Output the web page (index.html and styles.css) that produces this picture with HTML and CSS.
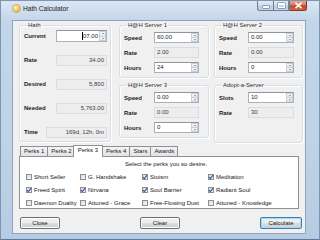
FILE: index.html
```html
<!DOCTYPE html>
<html lang="en">
<head>
    <meta charset="UTF-8">
    <title>Hath Calculator</title>
    <link rel="stylesheet" href="styles.css">
</head>
<body>
    <div class="window">
        <div class="titlebar">
            <span class="app-icon"></span>
            <span class="title">Hath Calculator</span>
            <div class="caption">
                <span class="cap min"><i></i></span>
                <span class="cap max"><i></i></span>
                <span class="cap close">
                    <svg width="9" height="7" viewBox="0 0 9 7"><path d="M1.5 0.8 L7.5 6.2 M7.5 0.8 L1.5 6.2" stroke="#fff" stroke-width="1.6" fill="none"/></svg>
                </span>
            </div>
        </div>

        <div class="client">
            <div class="groups">
                <fieldset class="group hath">
                    <legend>Hath</legend>
                    <div class="hath-rows">
                        <div class="row">
                            <span class="lbl">Current</span>
                            <span class="field wide right"><span class="caret"></span>07.00<span class="spin"><i class="up"></i><i class="down"></i></span></span>
                        </div>
                        <div class="row">
                            <span class="lbl">Rate</span>
                            <span class="readout wide right">34.00</span>
                        </div>
                        <div class="row">
                            <span class="lbl">Desired</span>
                            <span class="readout wide right">5,800</span>
                        </div>
                        <div class="row">
                            <span class="lbl">Needed</span>
                            <span class="readout wide right">5,763.00</span>
                        </div>
                        <div class="row">
                            <span class="lbl">Time</span>
                            <span class="readout time right">169d, 12h, 0m</span>
                        </div>
                    </div>
                </fieldset>

                <div class="stack">
                    <fieldset class="group server">
                        <legend>H@H Server 1</legend>
                        <div class="srow"><span class="lbl">Speed</span><span class="field">60.00<span class="spin"><i class="up"></i><i class="down"></i></span></span></div>
                        <div class="srow"><span class="lbl">Rate</span><span class="readout">2.00</span></div>
                        <div class="srow"><span class="lbl">Hours</span><span class="field">24<span class="spin"><i class="up"></i><i class="down"></i></span></span></div>
                    </fieldset>
                    <fieldset class="group server">
                        <legend>H@H Server 3</legend>
                        <div class="srow"><span class="lbl">Speed</span><span class="field">0.00<span class="spin"><i class="up"></i><i class="down"></i></span></span></div>
                        <div class="srow"><span class="lbl">Rate</span><span class="readout">0.00</span></div>
                        <div class="srow"><span class="lbl">Hours</span><span class="field">0<span class="spin"><i class="up"></i><i class="down"></i></span></span></div>
                    </fieldset>
                </div>

                <div class="stack right-col">
                    <fieldset class="group server">
                        <legend>H@H Server 2</legend>
                        <div class="srow"><span class="lbl">Speed</span><span class="field">0.00<span class="spin"><i class="up"></i><i class="down"></i></span></span></div>
                        <div class="srow"><span class="lbl">Rate</span><span class="readout">0.00</span></div>
                        <div class="srow"><span class="lbl">Hours</span><span class="field">0<span class="spin"><i class="up"></i><i class="down"></i></span></span></div>
                    </fieldset>
                    <fieldset class="group server adopt">
                        <legend>Adopt-a-Server</legend>
                        <div class="srow"><span class="lbl">Slots</span><span class="field">10<span class="spin"><i class="up"></i><i class="down"></i></span></span></div>
                        <div class="srow"><span class="lbl">Rate</span><span class="readout">30</span></div>
                    </fieldset>
                </div>
            </div>

            <div class="tabs">
                <span class="tab">Perks 1</span>
                <span class="tab">Perks 2</span>
                <span class="tab active">Perks 3</span>
                <span class="tab">Perks 4</span>
                <span class="tab">Stars</span>
                <span class="tab">Awards</span>
            </div>
            <div class="panel">
                <div class="panel-head">Select the perks you so desire.</div>
                <div class="perks" id="perks"></div>
            </div>

            <div class="buttons">
                <span class="btn">Close</span>
                <span class="btn">Clear</span>
                <span class="btn calc">Calculate</span>
            </div>
        </div>
    </div>

    <script>
        const perks = [
            { name: 'Short Seller', on: false },
            { name: 'G. Handshake', on: false },
            { name: 'Stoism', on: true },
            { name: 'Meditation', on: true },
            { name: 'Freed Spirit', on: true },
            { name: 'Nirvana', on: true },
            { name: 'Soul Barrier', on: true },
            { name: 'Radiant Soul', on: true },
            { name: 'Daemon Duality', on: false },
            { name: 'Attuned - Grace', on: false },
            { name: 'Free-Flowing Dust', on: false },
            { name: 'Attuned - Knowledge', on: false }
        ];

        const check = '<svg width="6" height="6" viewBox="0 0 6 6"><path d="M0.9 3.1 L2.4 4.6 L5.1 1.1" stroke="#3a56a3" stroke-width="1.2" fill="none"/></svg>';

        document.getElementById('perks').innerHTML = perks.map(p => `
            <label class="perk">
                <span class="box">${p.on ? check : ''}</span>
                <span>${p.name}</span>
            </label>
        `).join('');
    </script>
</body>
</html>
```

FILE: styles.css
```css
* {
    margin: 0;
    padding: 0;
    box-sizing: border-box;
}

body {
    width: 320px;
    height: 240px;
    overflow: hidden;
    font-family: "Liberation Sans", Arial, sans-serif;
    font-size: 6px;
    color: #1e1e1e;
}

.window {
    width: 320px;
    height: 240px;
    display: flex;
    flex-direction: column;
    padding: 0 13px 5px 11px;
    border: 1px solid #7d95b2;
    border-bottom-color: #5b7aa3;
    background: linear-gradient(180deg, #dce7f3 0, #c3d5e9 20px, #bfd2e7 60%, #b7cbe2 100%);
}

/* barra de titulo */
.titlebar {
    height: 19px;
    display: flex;
    align-items: flex-start;
}

.app-icon {
    width: 7px;
    height: 7px;
    margin: 4px 0 0 1px;
    border-radius: 50%;
    background: radial-gradient(circle at 35% 35%, #fff4bd, #f2c653 55%, #c88a1e);
    box-shadow: 0 0 0 0.5px #b07818;
}

.title {
    margin: 3px 0 0 3px;
    font-size: 6.6px;
    line-height: 9px;
    color: #1b1b1b;
}

.caption {
    margin-left: auto;
    margin-right: -1px;
    display: flex;
}

.cap {
    height: 10px;
    display: flex;
    align-items: center;
    justify-content: center;
    border: 1px solid #6b7f9c;
    border-top: none;
}

.min,
.max {
    width: 16px;
    background: linear-gradient(180deg, #e4ecf5 0, #cfdbe9 50%, #b9cadf 51%, #c6d6e8 100%);
}

.min {
    border-radius: 0 0 0 3px;
    border-right: none;
}

.min i {
    width: 6px;
    height: 2px;
    margin-top: 3px;
    background: #fff;
    box-shadow: 0 0 0 0.5px #526a8e;
}

.max i {
    width: 7px;
    height: 5px;
    border: 1px solid #fff;
    border-top-width: 2px;
    box-shadow: 0 0 0 0.5px #526a8e;
}

.close {
    width: 18px;
    border-color: #7a3a2e;
    border-left-color: #6b7f9c;
    border-radius: 0 0 3px 0;
    background: linear-gradient(180deg, #e9a898 0, #d8735e 45%, #c4401f 55%, #d66a3e 100%);
}

/* area cliente */
.client {
    flex: 1;
    background: #f0f0f0;
    border: 1px solid #8fa5be;
    display: flex;
    flex-direction: column;
}

.groups {
    display: flex;
    align-items: flex-start;
    margin: 1px 0 0 6px;
}

.group {
    border: 1px solid #d5dfe5;
    border-radius: 3px;
    box-shadow: inset 1px 1px 0 #fff, 1px 1px 0 #fff;
    padding: 3px 3px 4px 4px;
}

.group legend {
    font-size: 6px;
    line-height: 7px;
    padding: 0 1px;
    margin-left: 3px;
    color: #2b2b2b;
}

.hath {
    width: 92px;
    height: 120px;
    padding-top: 1px;
}

.hath-rows {
    display: flex;
    flex-direction: column;
    gap: 12px;
}

.row {
    display: flex;
    align-items: center;
    height: 12px;
}

.lbl {
    font-weight: 700;
    color: #1a1a1a;
}

.field,
.readout {
    height: 11px;
    display: flex;
    align-items: center;
    padding-left: 2px;
    line-height: 9px;
}

.field {
    background: #fff;
    border: 1px solid #abb2ba;
    border-top-color: #8e959d;
    padding-right: 0;
}

.readout {
    background: #ededed;
    border: 1px solid #dadcdf;
    color: #404040;
}

.right {
    justify-content: flex-end;
    padding-right: 2px;
}

.wide {
    margin-left: auto;
    width: 51px;
}

.row .field {
    height: 12px;
    padding-right: 0;
}

.time {
    margin-left: auto;
    width: 61px;
}

.caret {
    width: 1px;
    height: 8px;
    background: #000;
}

.spin {
    margin-left: auto;
    width: 7px;
    height: 100%;
    display: flex;
    flex-direction: column;
}

.right .spin {
    margin-left: 1px;
}

.spin i {
    flex: 1;
    display: flex;
    align-items: center;
    justify-content: center;
    background: linear-gradient(180deg, #f6f8fa, #e2e7ed);
    border: 1px solid #c7cfd8;
}

.spin i + i {
    border-top: none;
}

.spin i::after {
    content: "";
    border-left: 1px solid transparent;
    border-right: 1px solid transparent;
}

.spin .up::after {
    border-bottom: 1px solid #4b5d7a;
}

.spin .down::after {
    border-top: 1px solid #4b5d7a;
}

/* colunas dos servidores */
.stack {
    display: flex;
    flex-direction: column;
    gap: 4px;
    width: 90px;
    margin-left: 8px;
}

.right-col {
    width: 89px;
    margin-left: 5px;
}

.server {
    display: flex;
    flex-direction: column;
    gap: 4px;
}

.srow {
    display: grid;
    grid-template-columns: 30px 45px;
    align-items: center;
    height: 11px;
}

.right-col .srow {
    grid-template-columns: 29px 46px;
}

.adopt {
    height: 61px;
}

/* abas */
.tabs {
    display: flex;
    align-items: flex-end;
    height: 12px;
    margin: 1px 0 0 6px;
    position: relative;
    z-index: 1;
}

.tab {
    height: 10px;
    padding: 0 3px;
    line-height: 9px;
    border: 1px solid #8d9097;
    border-bottom: none;
    margin-right: -1px;
    background: linear-gradient(180deg, #f4f4f4, #e3e3e3);
    color: #202020;
}

.tab:first-child {
    margin-left: 1px;
}

.tab.active {
    height: 12px;
    margin: 0 -1px -1px -2px;
    padding: 0 4px;
    line-height: 9px;
    background: #fff;
    position: relative;
    z-index: 2;
}

.panel {
    width: 280px;
    height: 53px;
    margin-left: 6px;
    background: #fff;
    border: 1px solid #8d9097;
}

.panel-head {
    margin-top: 4px;
    padding-left: 105px;
    line-height: 7px;
    color: #202020;
}

.perks {
    display: grid;
    grid-template-columns: 54px 62px 66px auto;
    row-gap: 6px;
    padding-left: 6px;
    margin-top: 5px;
}

.perk {
    display: flex;
    align-items: center;
    gap: 2px;
    height: 7px;
    color: #202020;
}

.box {
    width: 6px;
    height: 6px;
    border: 1px solid #8e8f8f;
    background: linear-gradient(135deg, #d8d8d8, #fafafa);
    display: flex;
    align-items: center;
    justify-content: center;
}

.box svg {
    flex: none;
}

/* botoes */
.buttons {
    display: flex;
    justify-content: space-between;
    margin-top: 8px;
    padding: 0 3px 0 7px;
}

.btn {
    width: 40px;
    height: 12px;
    display: flex;
    align-items: center;
    justify-content: center;
    border: 1px solid #707070;
    border-radius: 2px;
    background: linear-gradient(180deg, #f2f2f2 0, #ebebeb 50%, #dddddd 51%, #cfcfcf 100%);
    box-shadow: inset 0 0 0 1px #fcfcfc;
    color: #1a1a1a;
}

.btn.calc {
    width: 42px;
    border-color: #3c7fb1;
    box-shadow: inset 0 0 0 1px #9fdcf7;
}
```
